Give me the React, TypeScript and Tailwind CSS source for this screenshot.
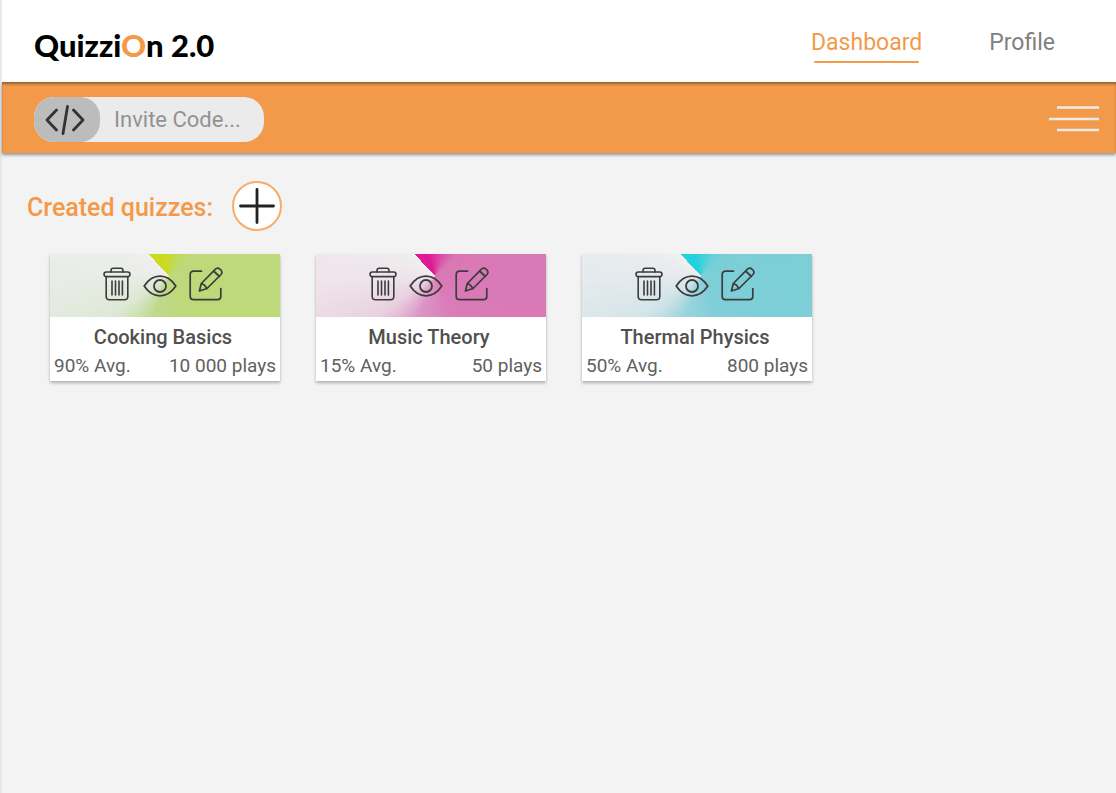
const ink = "#3c3c3c";

type Quiz = { title: string; avg: string; plays: string; header: string };

const quizzes: Quiz[] = [
  {
    title: "Cooking Basics",
    avg: "90% Avg.",
    plays: "10 000 plays",
    header:
      "bg-[conic-gradient(from_-43deg_at_119px_22px,#cadb1e_0deg,#cadb1e_25deg,#bdd97a_90deg,#bdd97a_200deg,#bfd98c_245deg,#dce8d4_278deg,#e8ece6_310deg,#f0f0f0_360deg)]",
  },
  {
    title: "Music Theory",
    avg: "15% Avg.",
    plays: "50 plays",
    header:
      "bg-[conic-gradient(from_-43deg_at_119px_22px,#e01a92_0deg,#e01a92_25deg,#d877b4_90deg,#da7cb9_200deg,#dc94c4_245deg,#e8d0e0_278deg,#efe4ea_310deg,#f0f0f0_360deg)]",
  },
  {
    title: "Thermal Physics",
    avg: "50% Avg.",
    plays: "800 plays",
    header:
      "bg-[conic-gradient(from_-43deg_at_119px_22px,#22d2dc_0deg,#22d2dc_25deg,#7acfd6_90deg,#80ced9_200deg,#98d4dc_245deg,#d2e4e8_278deg,#e4eaed_310deg,#f0f0f0_360deg)]",
  },
];

function TrashIcon() {
  return (
    <svg width="28" height="34" viewBox="0 0 28 34" fill="none" stroke={ink} strokeWidth="1.6" strokeLinejoin="round" strokeLinecap="round" aria-hidden="true">
      <path d="M8 5V3.4C8 2 8.800 1.200 10.200 1.200h7.600C19.200 1.200 20 2 20 3.400V5" />
      <rect x="1" y="5" width="26" height="4.600" rx="2.300" />
      <path d="M3.200 9.800V29.500c0 2 1.300 3.300 3.300 3.300h15c2 0 3.300-1.300 3.300-3.300V9.800M9 14v14M12.500 14v14M16 14v14M19.400 14v14" />
    </svg>
  );
}

function EyeIcon() {
  return (
    <svg width="34" height="22" viewBox="0 0 34 22" fill="none" stroke={ink} strokeWidth="1.800" strokeLinejoin="round" aria-hidden="true">
      <path d="M1.200 11C5.500 4.500 11 1.200 17 1.200S28.500 4.500 32.800 11C28.500 17.500 23 20.800 17 20.800S5.500 17.500 1.200 11Z" />
      <circle cx="17" cy="11" r="6" />
    </svg>
  );
}

function EditIcon() {
  return (
    <svg width="34" height="34" viewBox="0 0 34 34" fill="none" stroke={ink} strokeWidth="1.700" strokeLinejoin="round" strokeLinecap="round" aria-hidden="true">
      <path d="M12.500 4.200H4.500C2.300 4.200 1.200 5.500 1.200 7.500V29.500c0 2 1.200 3.200 3.300 3.200h24c2 0 3.300-1.200 3.300-3.200V21.500" />
      <path d="M10.400 24 12.300 16.500 26.200 2.300C27.600 .9 29.500 .8 31 2.200 33.200 4 33.400 6 32 7.500L18 21.500ZM12.300 16.500l3 1.500 2.700 3.500M24.500 4l6 5.500" />
    </svg>
  );
}

function QuizCard({ quiz }: { quiz: Quiz }) {
  return (
    <article className="w-[230px] bg-white shadow-[0_2px_3px_rgba(0,0,0,0.28)]">
      <div className={`flex h-[63px] items-center pb-1 pl-[53px] ${quiz.header}`}>
        <button type="button" aria-label={`Delete ${quiz.title}`}><TrashIcon /></button>
        <button type="button" aria-label={`Preview ${quiz.title}`} className="mt-1 ml-3"><EyeIcon /></button>
        <button type="button" aria-label={`Edit ${quiz.title}`} className="ml-3"><EditIcon /></button>
      </div>
      <h2 className="pt-2 pr-1 text-center text-xl leading-6 font-medium text-[#505050]">{quiz.title}</h2>
      <p className="flex justify-between px-1 pt-[5px] pb-[3px] text-[19px] leading-6 text-[#606060]">
        <span>{quiz.avg}</span>
        <span>{quiz.plays}</span>
      </p>
    </article>
  );
}

export default function App() {
  return (
    <div className="min-h-screen border-l-2 border-[#e8e8e8] bg-[#f3f3f3] font-[Roboto,sans-serif]">
      <header className="flex h-[82px] items-center justify-between bg-white pr-[61px] pl-8">
        <a href="#home" className="mt-2 font-[Lato,sans-serif] text-[31px] leading-9 font-black text-black">
          Quizzi<span className="text-[#f39a4a]">O</span>n 2.0
        </a>
        <nav className="mt-2 flex gap-[67px] text-[23px] leading-8">
          <a href="#dashboard" className="text-[#f39a4a]">
            Dashboard
            <span className="mx-auto mt-0.5 block h-0.5 w-[105px] rounded bg-[#f39a4a]" />
          </a>
          <a href="#profile" className="text-[#808080]">Profile</a>
        </nav>
      </header>
      <div className="flex h-[71px] items-center justify-between bg-[#f39a4a] pr-[17px] pl-8 shadow-[inset_0_3px_3px_-1px_rgba(0,0,0,0.4),0_2px_3px_rgba(0,0,0,0.4)]">
        <div className="mt-1 flex h-[45px] w-[230px] overflow-hidden rounded-[20px] bg-[#ebebeb]">
          <button type="button" aria-label="Join with invite code" className="flex w-[66px] shrink-0 items-center justify-center rounded-[20px] bg-[#bcbcbc] pr-1">
            <svg width="40" height="30" viewBox="0 0 40 30" fill="none" stroke="#333" strokeWidth="2.800" strokeLinecap="round" strokeLinejoin="round" aria-hidden="true">
              <path d="M11.500 5 2 15l9.500 10M28.500 5 38 15l-9.500 10M22.500 1.500 18 28.500" />
            </svg>
          </button>
          <input aria-label="Invite code" placeholder="Invite Code..." className="min-w-0 flex-1 bg-transparent pl-3.5 text-[22px] leading-7 outline-none placeholder:text-[#929292]" />
        </div>
        <button type="button" aria-label="Menu" className="mt-0.5">
          <svg width="50" height="26" viewBox="0 0 50 26" stroke="#eeeae5" strokeWidth="2.400" aria-hidden="true">
            <path d="M8 1.500h42M0 13h50M8 24h42" />
          </svg>
        </button>
      </div>
      <main className="px-[25px] pt-7">
        <div className="flex items-center gap-[19px]">
          <h1 className="pt-1 text-[25px] leading-8 font-medium text-[#f39a4a]">Created quizzes:</h1>
          <button type="button" aria-label="Create quiz" className="flex size-[50px] items-center justify-center rounded-full border-2 border-[#f5ac6c] bg-white">
            <svg width="36" height="36" viewBox="0 0 36 36" stroke="#222" strokeWidth="2.800" strokeLinecap="round" aria-hidden="true">
              <path d="M18 1.500v33M1.500 18h33" />
            </svg>
          </button>
        </div>
        <section aria-label="Created quizzes" className="mt-[23px] flex flex-wrap gap-9 pl-[23px]">
          {quizzes.map((quiz) => <QuizCard key={quiz.title} quiz={quiz} />)}
        </section>
      </main>
    </div>
  );
}
